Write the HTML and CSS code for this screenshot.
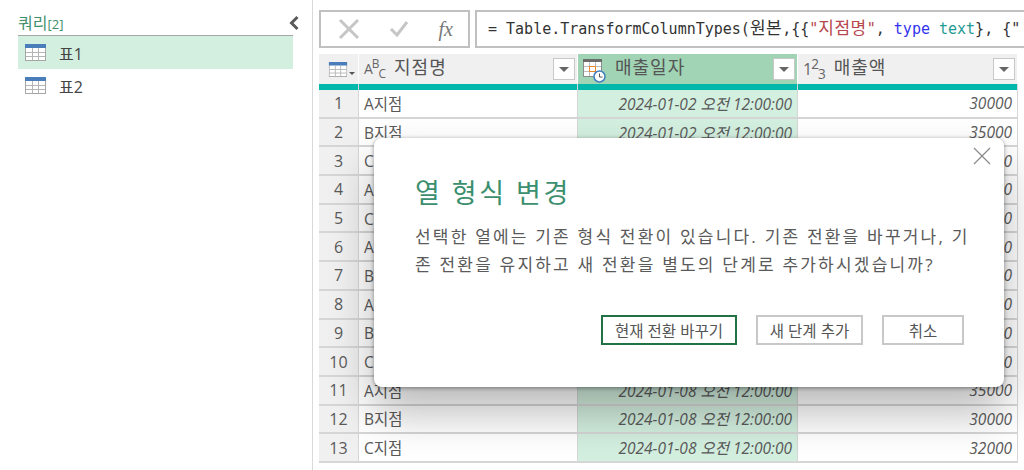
FILE: index.html
```html
<!DOCTYPE html>
<html lang="ko">

<head>
    <meta charset="UTF-8">
    <title>열 형식 변경</title>
    <link rel="stylesheet" href="styles.css">
</head>

<body>
    <svg class="defs" width="0" height="0">
        <symbol id="table-icon" viewBox="0 0 21 17">
            <rect x="0.5" y="0.5" width="20" height="16" fill="#fff" stroke="#a6a6a6"/>
            <rect x="0" y="0" width="21" height="4" fill="#4a7ebb"/>
            <path d="M7.5 4v12M13.5 4v12M1 8.5h19M1 12.5h19" stroke="#b5b5b5" fill="none"/>
        </symbol>
        <symbol id="dropdown" viewBox="0 0 22 22">
            <rect x="0.5" y="0.5" width="21" height="21" fill="#fff" stroke="#c8c8c8"/>
            <path d="M6 9h10l-5 5z" fill="#666"/>
        </symbol>
    </svg>

    <div class="app">
        <aside class="queries">
            <div class="queries-head">
                <span class="queries-title">쿼리<span class="queries-count">[2]</span></span>
                <svg class="collapse" width="12" height="16" viewBox="0 0 12 16">
                    <path d="M9.5 2L3.5 8l6 6" fill="none" stroke="#595959" stroke-width="3"/>
                </svg>
            </div>
            <div class="query selected">
                <svg width="21" height="17"><use href="#table-icon"/></svg>
                <span>표1</span>
            </div>
            <div class="query">
                <svg width="21" height="17"><use href="#table-icon"/></svg>
                <span>표2</span>
            </div>
        </aside>

        <main class="content">
            <div class="formula-bar">
                <div class="formula-buttons">
                    <svg width="22" height="22" viewBox="0 0 22 22">
                        <path d="M2 2l18 18M20 2L2 20" stroke="#c6c6c6" stroke-width="3" fill="none"/>
                    </svg>
                    <svg width="20" height="18" viewBox="0 0 20 18">
                        <path d="M2 9l6 6L18 2" stroke="#c6c6c6" stroke-width="3" fill="none"/>
                    </svg>
                    <span class="fx">fx</span>
                </div>
                <div class="formula-input">= Table.TransformColumnTypes(<span class="ko">원본</span>,{{<span class="str">"<span class="ko">지점명</span>"</span>, <span class="kw">type</span> <span class="type">text</span>}, {"</div>
            </div>

            <div class="grid">
                <div class="head corner">
                    <svg width="20" height="15" viewBox="0 0 21 17"><use href="#table-icon"/></svg>
                    <svg class="corner-arrow" width="6" height="4" viewBox="0 0 6 4"><path d="M0 0h6L3 3z" fill="#555"/></svg>
                </div>
                <div class="head">
                    <span class="type-abc">A<sup>B</sup><sub>C</sub></span>
                    <span class="head-name">지점명</span>
                    <svg class="drop" width="22" height="22"><use href="#dropdown"/></svg>
                </div>
                <div class="head on">
                    <svg class="date-icon" width="23" height="26" viewBox="0 0 23 26">
                        <rect x="0.5" y="1.5" width="18" height="17" fill="#fff" stroke="#8c8c8c"/>
                        <rect x="0" y="1" width="19" height="3" fill="#6b6b6b"/>
                        <path d="M6.5 4v14M12.5 4v14M1 8.5h17M1 13.5h17" stroke="#bdbdbd" fill="none"/>
                        <rect x="6.5" y="8.5" width="6" height="5" fill="#fff" stroke="#e8872b"/>
                        <circle cx="16.5" cy="18.5" r="5.5" fill="#fff" stroke="#3f7fbf" stroke-width="1.5"/>
                        <path d="M16.5 15.5v3.5h3" stroke="#555" fill="none"/>
                    </svg>
                    <span class="head-name">매출일자</span>
                    <svg class="drop" width="22" height="22"><use href="#dropdown"/></svg>
                </div>
                <div class="head">
                    <span class="type-num">1<sup>2</sup><sub>3</sub></span>
                    <span class="head-name">매출액</span>
                    <svg class="drop" width="22" height="22"><use href="#dropdown"/></svg>
                </div>

                <div class="quality"></div>
                <div class="quality"></div>
                <div class="quality"></div>
                <div class="quality"></div>

                <div class="num">1</div><div class="cell">A지점</div><div class="cell date">2024-01-02 오전 12:00:00</div><div class="cell val">30000</div>
                <div class="num">2</div><div class="cell">B지점</div><div class="cell date">2024-01-02 오전 12:00:00</div><div class="cell val">35000</div>
                <div class="num">3</div><div class="cell">C지점</div><div class="cell date">2024-01-03 오전 12:00:00</div><div class="cell val">32000</div>
                <div class="num">4</div><div class="cell">A지점</div><div class="cell date">2024-01-03 오전 12:00:00</div><div class="cell val">30000</div>
                <div class="num">5</div><div class="cell">C지점</div><div class="cell date">2024-01-04 오전 12:00:00</div><div class="cell val">35000</div>
                <div class="num">6</div><div class="cell">A지점</div><div class="cell date">2024-01-05 오전 12:00:00</div><div class="cell val">30000</div>
                <div class="num">7</div><div class="cell">B지점</div><div class="cell date">2024-01-05 오전 12:00:00</div><div class="cell val">32000</div>
                <div class="num">8</div><div class="cell">A지점</div><div class="cell date">2024-01-06 오전 12:00:00</div><div class="cell val">35000</div>
                <div class="num">9</div><div class="cell">B지점</div><div class="cell date">2024-01-07 오전 12:00:00</div><div class="cell val">30000</div>
                <div class="num">10</div><div class="cell">C지점</div><div class="cell date">2024-01-07 오전 12:00:00</div><div class="cell val">32000</div>
                <div class="num">11</div><div class="cell">A지점</div><div class="cell date">2024-01-08 오전 12:00:00</div><div class="cell val">35000</div>
                <div class="num">12</div><div class="cell">B지점</div><div class="cell date">2024-01-08 오전 12:00:00</div><div class="cell val">30000</div>
                <div class="num">13</div><div class="cell">C지점</div><div class="cell date">2024-01-08 오전 12:00:00</div><div class="cell val">32000</div>
            </div>
        </main>
    </div>

    <div class="dialog">
        <svg class="dialog-close" width="18" height="18" viewBox="0 0 18 18">
            <path d="M1 1l16 16M17 1L1 17" stroke="#8a8a8a" stroke-width="1.2" fill="none"/>
        </svg>
        <h1 class="dialog-title">열 형식 변경</h1>
        <p class="dialog-text">선택한 열에는 기존 형식 전환이 있습니다. 기존 전환을 바꾸거나, 기<br>존 전환을 유지하고 새 전환을 별도의 단계로 추가하시겠습니까?</p>
        <div class="dialog-buttons">
            <button class="btn primary">현재 전환 바꾸기</button>
            <button class="btn">새 단계 추가</button>
            <button class="btn cancel">취소</button>
        </div>
    </div>
</body>

</html>
```

FILE: styles.css
```css
body {
    margin: 0;
    height: 470px;
    overflow: hidden;
    position: relative;
    background: #fff;
    color: #444;
    font-family: "Open Sans", "Noto Sans CJK KR", sans-serif;
}

.defs {
    display: none;
}

.app {
    display: flex;
    height: 470px;
}

/* 쿼리 패널 */
.queries {
    width: 313px;
    box-sizing: border-box;
    flex-shrink: 0;
    padding: 14px 19px 0 18px;
    border-right: 1px solid #d9d9d9;
}

.queries-head {
    display: flex;
    justify-content: space-between;
    align-items: flex-end;
    height: 21px;
    border-bottom: 1px solid #a6a6a6;
}

.queries-title {
    font-size: 16px;
    line-height: 21px;
    color: #3f8f6b;
}

.queries-count {
    font-size: 13px;
}

.collapse {
    margin: 0 -7px 4px 0;
}

.query {
    display: flex;
    align-items: center;
    gap: 13px;
    height: 33px;
    padding-left: 7px;
    font-size: 16px;
    color: #444;
}

.query.selected {
    background: #d3efdf;
}

/* 수식 입력줄 */
.content {
    flex: 1;
    min-width: 0;
    padding: 10px 0 0 6px;
}

.formula-bar {
    display: flex;
    gap: 5px;
    height: 38px;
}

.formula-buttons {
    width: 151px;
    box-sizing: border-box;
    display: flex;
    align-items: center;
    justify-content: space-between;
    padding: 0 15px 0 17px;
    border: 2px solid #c0c0c0;
}

.fx {
    font-family: "Liberation Serif", serif;
    font-style: italic;
    font-size: 20px;
    color: #777;
}

.formula-input {
    flex: 1;
    min-width: 0;
    padding-left: 11px;
    border: 2px solid #c0c0c0;
    border-right: none;
    font-family: "DejaVu Sans Mono", "Noto Sans CJK KR", monospace;
    font-size: 15px;
    line-height: 34px;
    color: #333;
    white-space: nowrap;
    overflow: hidden;
}

.ko {
    font-size: 17px;
    letter-spacing: 0.5px;
    line-height: 1;
}

.str {
    color: #b5474d;
}

.kw {
    color: #3333ee;
}

.type {
    color: #1f9a94;
}

/* 데이터 표 */
.grid {
    display: grid;
    grid-template-columns: 40px 219px 220px 220px;
    grid-template-rows: 30px 6px repeat(13, 28.7px);
    margin-top: 6px;
    width: 699px;
    font-size: 15.5px;
    background: #d6d6d6;
}

.head {
    display: flex;
    align-items: center;
    background: #f0f0f0;
    padding-left: 5px;
    border-right: 1px solid #fff;
}

.head.on {
    background: #a0d4b4;
}

.corner {
    padding-left: 9px;
}

.corner-arrow {
    margin: 9px 0 0 1px;
}

.head-name {
    margin: -5px 0 0 9px;
    font-size: 18px;
    line-height: 24px;
    letter-spacing: 1px;
    color: #555;
}

.drop {
    margin-left: auto;
    margin-right: 2px;
}

.date-icon {
    margin-top: 3px;
}

.type-abc,
.type-num {
    font-size: 14px;
    color: #666;
    line-height: 1;
    letter-spacing: -1px;
}

.type-num {
    font-size: 16px;
}

.head sup,
.head sub {
    font-size: 0.85em;
    line-height: 0;
}

.quality {
    background: #01b8aa;
    margin-right: 1px;
}

.quality:first-of-type {
    background: #f0f0f0;
}

.num {
    display: flex;
    align-items: center;
    justify-content: center;
    background: #f0f0f0;
    margin: 0 1px 2px 0;
    font-size: 16px;
    color: #5a5a5a;
}

.cell {
    display: flex;
    align-items: center;
    padding: 0 5px;
    margin: 0 1px 2px 0;
    background: #fff;
    color: #5a5a5a;
}

.date {
    justify-content: flex-end;
    background: #d3efdf;
    font-style: italic;
}

.val {
    justify-content: flex-end;
    font-style: italic;
}

/* 대화 상자 */
.dialog {
    position: absolute;
    left: 374px;
    top: 138px;
    width: 630px;
    height: 249px;
    box-sizing: border-box;
    padding: 35px 20px 0 41px;
    background: #fff;
    border-radius: 8px;
    box-shadow: 0 1px 4px rgba(0, 0, 0, 0.4), 0 25px 45px rgba(0, 0, 0, 0.28);
}

.dialog-close {
    position: absolute;
    top: 9px;
    right: 13px;
}

.dialog-title {
    margin: 0;
    font-size: 27px;
    line-height: 40px;
    font-weight: 400;
    letter-spacing: 2.5px;
    color: #3c8f6e;
}

.dialog-text {
    margin: 10px 0 0;
    font-size: 17px;
    line-height: 28px;
    letter-spacing: 2.2px;
    color: #5a5a5a;
    white-space: nowrap;
}

.dialog-buttons {
    display: flex;
    justify-content: flex-end;
    gap: 19px;
    margin: 36px 20px 0 0;
}

.btn {
    height: 30px;
    padding: 0;
    width: 107px;
    background: #fff;
    border: 2px solid #c8c8c8;
    font-family: inherit;
    font-size: 15.5px;
    color: #555;
}

.btn.primary {
    width: 136px;
    border-color: #217346;
}

.btn.cancel {
    width: 82px;
}
```
